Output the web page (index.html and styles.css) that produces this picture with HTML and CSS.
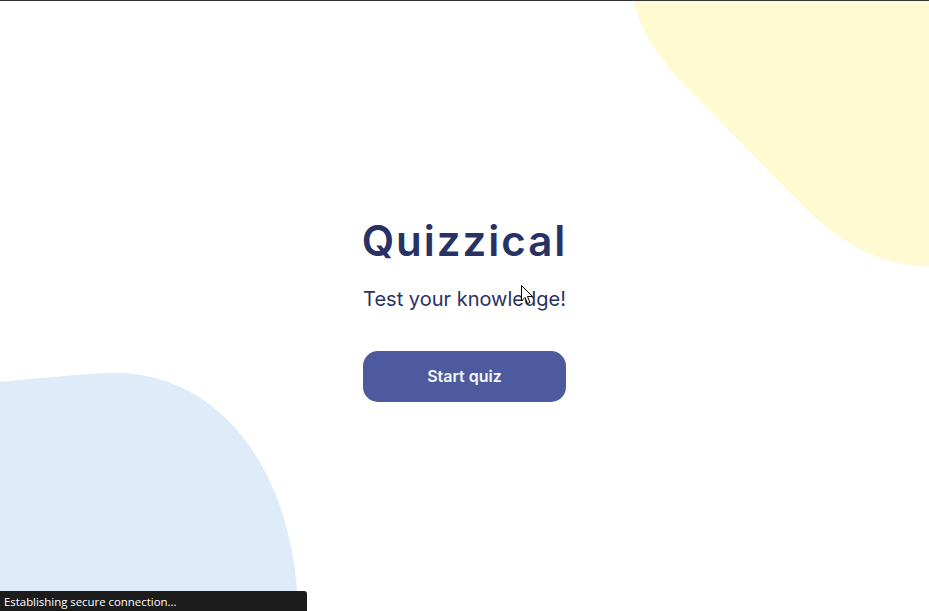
FILE: index.html
```html
<!DOCTYPE html>
<html>
<head>
<meta charset="utf-8">
<link rel="stylesheet" href="styles.css">
</head>
<body>
<div class="topline"></div>
<svg class="blob blob-yellow" width="295" height="266" viewBox="0 0 295 266"><path d="M0 0 C 5 30, 25 60, 60 95 L 166 203 C 200 237, 240 266, 295 266 L 295 0 Z" fill="#FFFAD1"/></svg>
<svg class="blob blob-blue" width="300" height="239" viewBox="0 0 300 239"><path d="M0 10 C 40 6, 80 2, 110 1 C 220 -2, 295 100, 298 239 L 0 239 Z" fill="#DEEBF8"/></svg>
<main class="intro">
  <h1 class="title">Quizzical</h1>
  <p class="subtitle">Test your knowledge!</p>
  <button class="start">Start quiz</button>
</main>
<svg class="cursor" width="13" height="20" viewBox="0 0 13 20"><path d="M0.5 0.5 L0.5 16 L4 12.5 L6.5 18.5 L9 17.5 L6.5 11.5 L11.5 11.5 Z" fill="#fff" stroke="#000" stroke-width="1" stroke-linejoin="miter"/></svg>
<div class="status">Establishing secure connection...</div>
</body>
</html>
```
FILE: styles.css
```css
html, body {
  margin: 0;
  padding: 0;
  height: 100%;
  background: #fff;
  overflow: hidden;
}
body {
  position: relative;
  font-family: Inter, "Noto Sans", sans-serif;
  color: #293264;
}
.topline {
  height: 1px;
  background: #333;
  position: relative;
  z-index: 3;
}
.blob {
  position: absolute;
  display: block;
}
.blob-yellow {
  top: 0;
  right: 0;
}
.blob-blue {
  left: 0;
  bottom: 0;
}
.intro {
  position: relative;
  z-index: 1;
  height: 610px;
  display: flex;
  flex-direction: column;
  align-items: center;
  justify-content: center;
  padding-top: 9px;
  box-sizing: border-box;
}
.title {
  margin: 0;
  font-size: 42px;
  font-weight: 600;
  letter-spacing: 2px;
  line-height: 1;
}
.subtitle {
  margin: 25px 0 0;
  font-size: 20px;
  font-weight: 400;
  line-height: 1.2;
}
.start {
  margin-top: 40px;
  width: 203px;
  height: 51px;
  border: none;
  border-radius: 15px;
  background: #4D5B9E;
  color: #F5F7FB;
  font-family: Inter, "Noto Sans", sans-serif;
  font-size: 16px;
  font-weight: 600;
  cursor: pointer;
}
.cursor {
  position: absolute;
  left: 521px;
  top: 285px;
  z-index: 4;
}
.status {
  position: absolute;
  left: 0;
  bottom: 0;
  width: 307px;
  height: 20px;
  box-sizing: border-box;
  background: #1c1c1c;
  border-top-right-radius: 3px;
  color: #fff;
  font-family: "Open Sans", "DejaVu Sans", sans-serif;
  font-size: 11.4px;
  line-height: 21px;
  padding-left: 4px;
  z-index: 5;
}
```
